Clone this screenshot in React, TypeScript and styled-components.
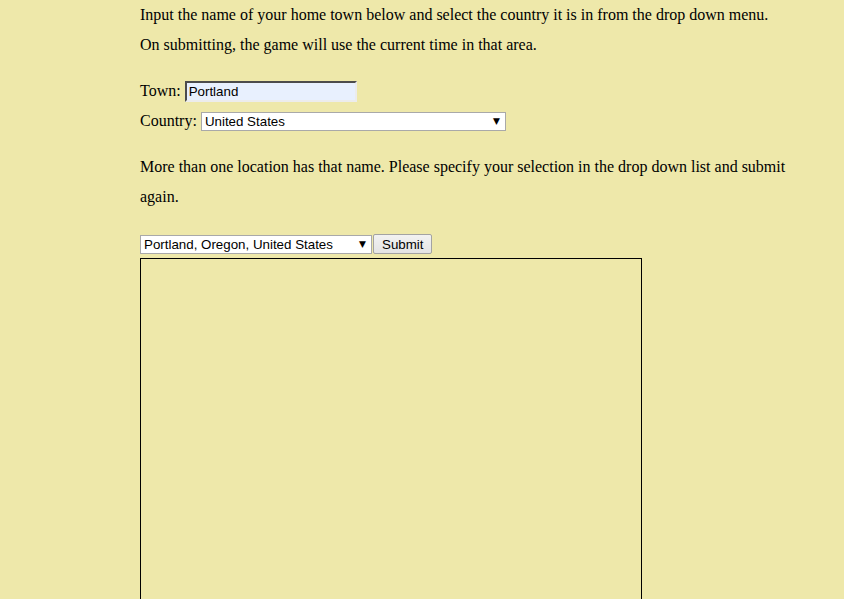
import React from "react";
import styled, { createGlobalStyle } from "styled-components";

const GlobalStyle = createGlobalStyle`
  html, body {
    margin: 0;
    padding: 0;
    background: #eee8aa;
  }
  body {
    font-family: "Liberation Serif", "Times New Roman", serif;
    font-size: 16px;
    color: #000;
  }
`;

const Page = styled.div`
  margin-left: 140px;
  width: 660px;
`;

const Text = styled.p`
  margin: 0;
  line-height: 30px;
`;

const Form = styled.div`
  display: flex;
  flex-direction: column;
  gap: 10px;
  margin-top: 21px;
  margin-bottom: 21px;
`;

const Row = styled.div`
  display: flex;
  align-items: center;
  gap: 4px;
  height: 20px;
`;

const TextInput = styled.input`
  box-sizing: border-box;
  width: 172px;
  height: 21px;
  padding: 1px 2px;
  border: 2px inset #ececec;
  border-top-color: #a0a0a0;
  border-left-color: #a0a0a0;
  background: #e8f0fe;
  font-family: "Liberation Sans", Arial, sans-serif;
  font-size: 13.33px;
  color: #000;
  outline: none;
`;

const SelectWrap = styled.span`
  position: relative;
  display: inline-flex;
`;

const Select = styled.select<{ $width: number }>`
  box-sizing: border-box;
  width: ${(p) => p.$width}px;
  height: 19px;
  padding: 0 18px 0 3px;
  border: 1px solid #a9a9a9;
  border-radius: 0;
  background: #fff;
  appearance: none;
  font-family: "Liberation Sans", Arial, sans-serif;
  font-size: 13.33px;
  color: #000;
  outline: none;
`;

const Arrow = styled.span`
  position: absolute;
  right: 6px;
  top: 3px;
  font-size: 9px;
  line-height: 12px;
  pointer-events: none;
  font-family: "DejaVu Sans", sans-serif;
`;

const ChoiceRow = styled.div`
  display: flex;
  align-items: center;
  gap: 1px;
  margin-top: 22px;
`;

const Button = styled.button`
  box-sizing: border-box;
  height: 20px;
  padding: 0 8px;
  border: 1px solid #a3a3a3;
  border-radius: 2px;
  background: linear-gradient(#f2f2f2, #e4e4e4);
  font-family: "Liberation Sans", Arial, sans-serif;
  font-size: 13.33px;
  color: #000;
`;

const Canvas = styled.div`
  box-sizing: border-box;
  width: 502px;
  height: 502px;
  margin-top: 4px;
  border: 1px solid #000;
`;

const Dropdown: React.FC<{ width: number; value: string }> = ({ width, value }) => (
  <SelectWrap>
    <Select $width={width} defaultValue={value}>
      <option>{value}</option>
    </Select>
    <Arrow>▼</Arrow>
  </SelectWrap>
);

export default function App() {
  return (
    <Page>
      <GlobalStyle />
      <Text>
        Input the name of your home town below and select the country it is in from the drop down menu.
        <br />
        On submitting, the game will use the current time in that area.
      </Text>
      <Form>
        <Row>
          <span>Town:</span>
          <TextInput defaultValue="Portland" />
        </Row>
        <Row>
          <span>Country:</span>
          <Dropdown width={305} value="United States" />
        </Row>
      </Form>
      <Text>
        More than one location has that name. Please specify your selection in the drop down list and submit again.
      </Text>
      <ChoiceRow>
        <Dropdown width={232} value="Portland, Oregon, United States" />
        <Button>Submit</Button>
      </ChoiceRow>
      <Canvas />
    </Page>
  );
}
